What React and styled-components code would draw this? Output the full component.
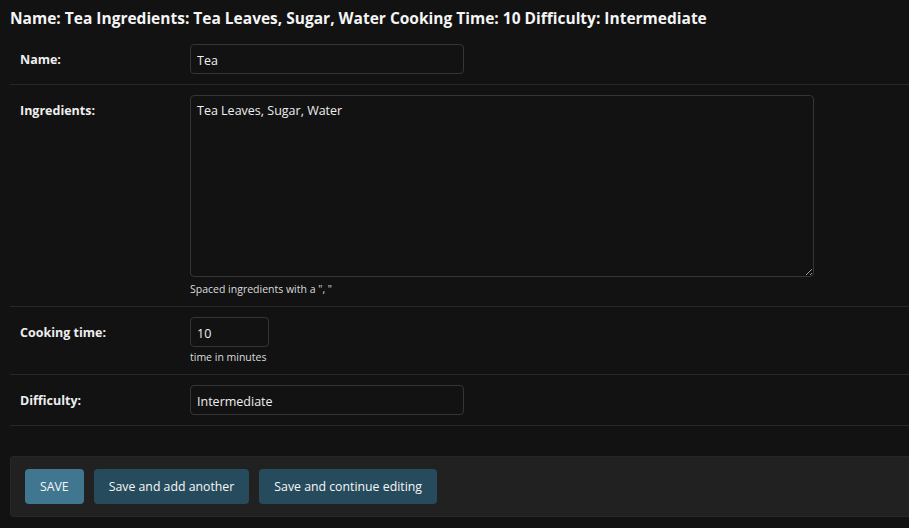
import * as React from "react"
import styled, { createGlobalStyle } from "styled-components"

const GlobalStyle = createGlobalStyle`
    html, body {
        margin: 0;
        padding: 0;
        background: #121212;
        color: #eeeeee;
        font-family: "Open Sans", "Noto Sans", Roboto, sans-serif;
    }
`

const Page = styled.div`
    min-height: 528px;
    background: #121212;
    overflow: hidden;
`

const Title = styled.h2`
    margin: 0;
    padding: 7px 10px 0;
    height: 27px;
    font-size: 15.5px;
    font-weight: 700;
    color: #f5f5f5;
    white-space: nowrap;
`

const Form = styled.form`
    margin: 0 0 0 10px;
`

const Row = styled.div`
    display: flex;
    padding: 10px;
    border-bottom: 1px solid #272727;
`

const Label = styled.label`
    flex: 0 0 160px;
    padding: 8px 10px 0 0;
    font-size: 12.5px;
    font-weight: 700;
    line-height: 15px;
    color: #eeeeee;
`

const Field = styled.div`
    display: flex;
    flex-direction: column;
    align-items: flex-start;
`

const Input = styled.input`
    box-sizing: border-box;
    width: ${p => p.$width}px;
    height: 30px;
    margin: 0;
    padding: 6px 6px 4px;
    background: #121212;
    color: #eeeeee;
    border: 1px solid #353535;
    border-radius: 4px;
    font-family: inherit;
    font-size: 12.5px;
    outline: none;
`

const TextArea = styled.textarea`
    display: block;
    box-sizing: border-box;
    width: 624px;
    height: 182px;
    margin: 0;
    padding: 6px 6px 5px;
    background: #121212;
    color: #eeeeee;
    border: 1px solid #353535;
    border-radius: 4px;
    font-family: inherit;
    font-size: 12.5px;
    line-height: 18px;
    outline: none;
    color-scheme: dark;
`

const Help = styled.div`
    margin-top: ${p => p.$gap}px;
    font-size: 10.5px;
    line-height: 13px;
    color: #dcdcdc;
`

const SubmitRow = styled.div`
    display: flex;
    gap: 10px;
    margin: 30px 0 0;
    padding: 12px 14px;
    background: #212121;
    border: 1px solid #272727;
    border-right: none;
    border-radius: 4px 0 0 4px;
`

const Button = styled.button`
    height: 35px;
    padding: 0 15px;
    border: none;
    border-radius: 4px;
    background: ${p => (p.$primary ? "#417690" : "#264b5d")};
    color: #f7f7f7;
    font-family: inherit;
    font-size: 12.3px;
    text-transform: ${p => (p.$primary ? "uppercase" : "none")};
    cursor: pointer;
`

const App = () => {
    return (
        <Page>
            <GlobalStyle />
            <Title>Name: Tea Ingredients: Tea Leaves, Sugar, Water Cooking Time: 10 Difficulty: Intermediate</Title>
            <Form onSubmit={e => e.preventDefault()}>
                <Row>
                    <Label htmlFor="id_name">Name:</Label>
                    <Field>
                        <Input id="id_name" $width={274} defaultValue="Tea" />
                    </Field>
                </Row>
                <Row>
                    <Label htmlFor="id_ingredients">Ingredients:</Label>
                    <Field>
                        <TextArea id="id_ingredients" defaultValue="Tea Leaves, Sugar, Water" />
                        <Help $gap={6}>Spaced ingredients with a ", "</Help>
                    </Field>
                </Row>
                <Row>
                    <Label htmlFor="id_cooking_time">Cooking time:</Label>
                    <Field>
                        <Input id="id_cooking_time" $width={79} defaultValue="10" />
                        <Help $gap={4}>time in minutes</Help>
                    </Field>
                </Row>
                <Row>
                    <Label htmlFor="id_difficulty">Difficulty:</Label>
                    <Field>
                        <Input id="id_difficulty" $width={274} defaultValue="Intermediate" />
                    </Field>
                </Row>
                <SubmitRow>
                    <Button $primary type="submit">Save</Button>
                    <Button type="button">Save and add another</Button>
                    <Button type="button">Save and continue editing</Button>
                </SubmitRow>
            </Form>
        </Page>
    )
}

export default App
